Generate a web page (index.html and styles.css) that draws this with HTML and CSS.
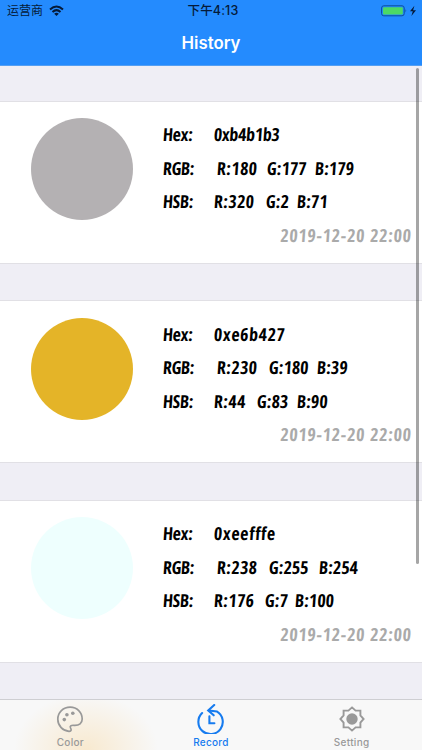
FILE: index.html
```html
<!DOCTYPE html>
<html lang="zh-CN">
<head>
<meta charset="utf-8">
<meta name="viewport" content="width=device-width, initial-scale=1">
<title>History</title>
<link rel="stylesheet" href="styles.css">
</head>
<body>
<div class="app">
  <header class="top">
    <div class="status">
      <div class="carrier"><span>运营商</span>
        <svg width="15" height="12" viewBox="0 0 15 12" fill="none" stroke="#051a38" stroke-width="2"><path d="M1 4.4Q7.5-1.4 14 4.4M3.5 7Q7.5 3.3 11.5 7"/><path d="M5.2 8.7Q7.5 6.7 9.8 8.7L7.5 11Z" fill="#051a38" stroke="none"/></svg>
      </div>
      <div class="clock">下午4:13</div>
      <div class="power">
        <svg width="36" height="12" viewBox="0 0 36 12"><rect x=".6" y=".8" width="22.6" height="10" rx="2.2" fill="none" stroke="#0c4f9c"/><rect x="2" y="2.2" width="19.8" height="7.2" rx="1" fill="#4cd964"/><path d="M24.5 4Q26 5.8 24.5 7.6Z" fill="#0c4f9c"/><path d="M33.4.8 29 6.3h2.8L30.4 11 35 5.2h-2.9Z" fill="#051a38"/></svg>
      </div>
    </div>
    <h1>History</h1>
  </header>
  <main class="list">
    <article class="card">
      <div class="swatch gray"></div>
      <div class="info">
        <div class="row"><span class="label">Hex:</span><span class="hex tight">0xb4b1b3</span></div>
        <div class="row rgb"><span class="label">RGB:</span><span class="c1">R:180</span><span class="c2">G:177</span><span>B:179</span></div>
        <div class="row hsb"><span class="label">HSB:</span><span class="c1">R:320</span><span class="c2">G:2</span><span>B:71</span></div>
        <time>2019-12-20 22:00</time>
      </div>
    </article>
    <article class="card">
      <div class="swatch gold"></div>
      <div class="info">
        <div class="row"><span class="label">Hex:</span><span class="hex loose">0xe6b427</span></div>
        <div class="row rgb wide"><span class="label">RGB:</span><span class="c1">R:230</span><span class="c2">G:180</span><span>B:39</span></div>
        <div class="row hsb short"><span class="label">HSB:</span><span class="c1">R:44</span><span class="c2">G:83</span><span>B:90</span></div>
        <time>2019-12-20 22:00</time>
      </div>
    </article>
    <article class="card">
      <div class="swatch ice"></div>
      <div class="info">
        <div class="row"><span class="label">Hex:</span><span class="hex loose">0xeefffe</span></div>
        <div class="row rgb widest"><span class="label">RGB:</span><span class="c1">R:238</span><span class="c2">G:255</span><span>B:254</span></div>
        <div class="row hsb mid"><span class="label">HSB:</span><span class="c1">R:176</span><span class="c2">G:7</span><span>B:100</span></div>
        <time>2019-12-20 22:00</time>
      </div>
    </article>
  </main>
  <div class="scrollbar"></div>
  <nav class="tabs">
    <a class="tab">
      <svg width="30" height="30" viewBox="0 0 30 30"><path d="M15.2 3.2C8.2 3.2 2.8 8.5 2.8 15.3c0 6.5 5.2 11.7 11.2 12 2.6.1 2.5-1.7 1.5-3.4-.9-1.7.5-2.8 3.2-2.6 5.7.4 8.5-2 8.5-6.2 0-6.7-5.2-11.9-12-11.9Z" fill="none" stroke="#999" stroke-width="1.7"/><g fill="#999"><circle cx="9.3" cy="15.6" r="1.8"/><circle cx="11.9" cy="10.7" r="1.8"/><circle cx="17.8" cy="9.2" r="1.8"/></g></svg>
      <span>Color</span>
    </a>
    <a class="tab active">
      <svg width="30" height="30" viewBox="0 0 30 30" fill="none" stroke="#167bef" stroke-width="2.1" stroke-linecap="round"><path d="M6.1 9.1A12.2 12.2 0 1 0 20.8 7.4L12.8 6.5"/><path d="m18.2 1-6 5.4 5.5 4.9M13.4 12.3v7h5"/></svg>
      <span>Record</span>
    </a>
    <a class="tab">
      <svg width="30" height="30" viewBox="0 0 30 30"><path d="m15 3.4 3.6 3.2h4.8v4.8l3.2 3.6-3.2 3.6v4.8h-4.8L15 26.6l-3.6-3.2H6.6v-4.8L3.4 15l3.2-3.6V6.6h4.8Z" fill="none" stroke="#999" stroke-width="1.9"/><circle cx="15" cy="15" r="5.7" fill="#999"/></svg>
      <span>Setting</span>
    </a>
  </nav>
</div>
</body>
</html>
```
FILE: styles.css
```css
* { box-sizing: border-box; }
body { margin: 0; }
.app {
  position: relative;
  display: flex;
  flex-direction: column;
  width: 422px;
  height: 750px;
  overflow: hidden;
  background: #efeef5;
  font-family: Inter, "Noto Sans CJK SC", sans-serif;
}
.top {
  flex: none;
  height: 66px;
  background: #248bfe;
  border-bottom: 1px solid #549ff3;
}
.status {
  display: grid;
  grid-template-columns: 1fr auto 1fr;
  align-items: center;
  height: 21px;
  padding: 0 5px 0 7px;
  color: #051a38;
  font-size: 12px;
  line-height: 21px;
}
.carrier { display: flex; align-items: center; gap: 6px; }
.clock { padding-left: 2px; font-weight: 500; font-size: 12.5px; letter-spacing: .15px; }
.power { display: flex; justify-content: flex-end; }
h1 {
  margin: 0;
  color: #fff;
  font-size: 16.8px;
  font-weight: 600;
  line-height: 44px;
  text-align: center;
}
.list {
  flex: 1;
  min-height: 0;
  display: flex;
  flex-direction: column;
  gap: 36.5px;
  padding-top: 34.6px;
}
.card {
  flex: none;
  display: flex;
  height: 163px;
  padding: 16.5px 0 0 31px;
  background: #fff;
  border: solid #e1e0e5;
  border-width: 1px 0;
}
.swatch { flex: none; width: 102px; height: 102px; border-radius: 50%; }
.gray { background: #b4b1b3; }
.gold { background: #e4b428; }
.ice { background: #eefffe; }
.info {
  flex: 1;
  padding-left: 30px;
  color: #000;
  font-family: "Liberation Sans Narrow", "Open Sans Condensed", "Liberation Sans", sans-serif;
  font-size: 18px;
  font-weight: 700;
  line-height: 33.5px;
}
.row { display: flex; height: 33.5px; white-space: nowrap; }
.row span { transform: skewX(-4deg); }
.label { flex: none; width: 51px; letter-spacing: -.4px; }
.tight { letter-spacing: -.3px; }
.loose { letter-spacing: .6px; }
.rgb .label { width: 54px; }
.c1, .c2 { flex: none; }
.c1 { letter-spacing: .3px; }
.rgb .c1 { width: 50px; }
.rgb .c2 { width: 48px; }
.wide .c1, .widest .c1 { width: 52px; }
.widest .c2 { width: 50px; }
.hsb .c1 { width: 52px; }
.hsb .c2 { width: 31px; }
.short .c1 { width: 43px; }
.short .c2 { width: 40px; }
.mid .c1 { width: 51px; }
.mid .c2 { width: 30px; }
time {
  display: block;
  padding-right: 10.4px;
  color: #aaa;
  letter-spacing: .65px;
  text-align: right;
  transform: skewX(-4deg);
}
.scrollbar {
  position: absolute;
  top: 68px;
  left: 416px;
  width: 3px;
  height: 496px;
  border-radius: 2px;
  background: rgba(0, 0, 0, .35);
}
.tabs {
  flex: none;
  display: grid;
  grid-template-columns: repeat(3, 1fr);
  height: 51px;
  border-top: 1px solid #ceced2;
  background: radial-gradient(ellipse 72px 56px at 86px 50px, #f8e9cf, #f8f8f8);
}
.tab {
  display: flex;
  flex-direction: column;
  align-items: center;
  padding-top: 4px;
  color: #999;
  font-size: 10px;
  font-weight: 500;
  letter-spacing: .3px;
  line-height: 12px;
}
.tab svg { flex: none; margin-bottom: 2.4px; }
.active { color: #167bef; }
```
